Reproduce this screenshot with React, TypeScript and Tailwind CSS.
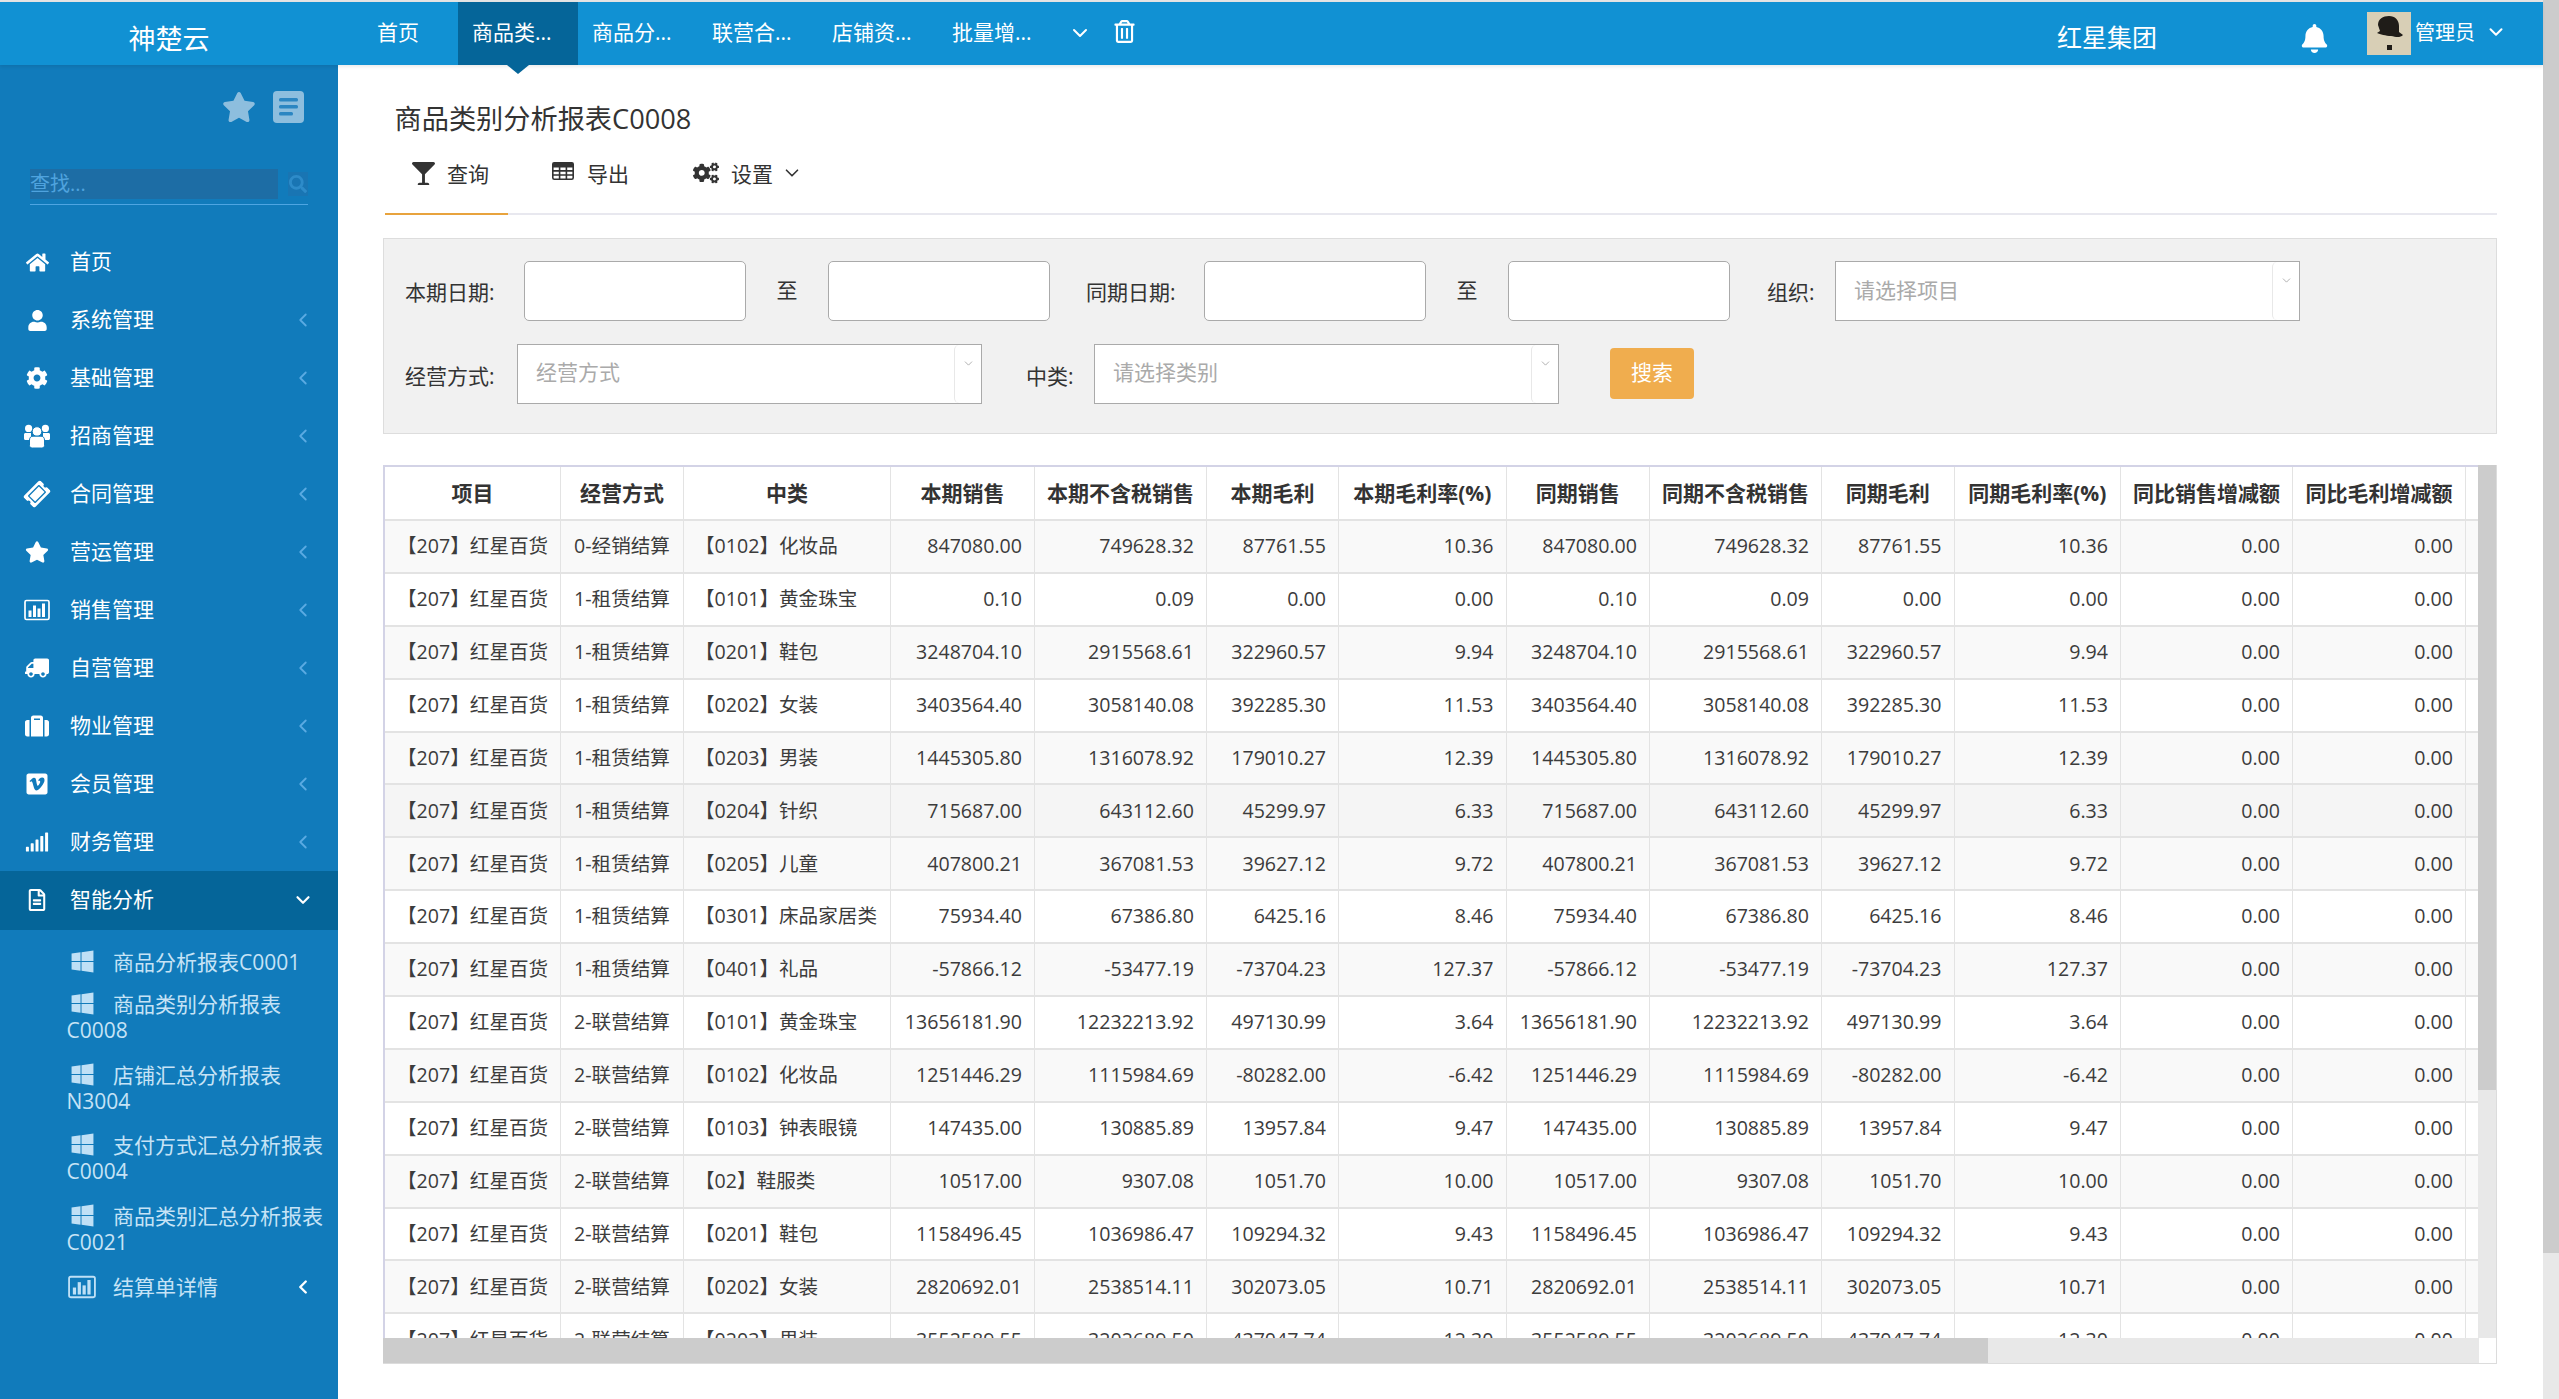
import React from "react";
import { ChevronLeft, ChevronDown } from "lucide-react";
import {
  FaHome, FaUser, FaCog, FaTicketAlt, FaStar, FaTruck, FaSuitcase,
  FaVimeoSquare, FaSignal, FaRegFileAlt, FaWindows, FaBell, FaRegTrashAlt, FaGlassMartini,
  FaCogs, FaSearch,
} from "react-icons/fa";

function UsersIcon({ size }: { size: number }) {
  return (
    <svg viewBox="0 0 26 24" width={size} height={size} fill="currentColor">
      <circle cx="4.6" cy="4.4" r="3.6" />
      <circle cx="21.4" cy="4.4" r="3.6" />
      <path d="M0 10.5c0-1.2 1-1.5 2-1.5h5v7H1.5C.6 16 0 15.4 0 14.5zM26 10.5c0-1.2-1-1.5-2-1.5h-5v7h5.500c.9 0 1.500-.6 1.500-1.500z" />
      <circle cx="13" cy="7.500" r="4.800" stroke="#117bbb" strokeWidth="1" />
      <path d="M5.500 16c0-2.500 1.500-3.800 3.500-3.800h8c2 0 3.500 1.300 3.500 3.800v5.500c0 1.600-1.500 2.500-3 2.500H8.500c-1.500 0-3-.9-3-2.500z" stroke="#117bbb" strokeWidth="1" />
    </svg>
  );
}

function BoxChart({ size }: { size: number }) {
  return (
    <svg viewBox="0 0 26 21" width={size} height={size} fill="currentColor">
      <rect x="1" y="1" width="24" height="19" rx="1.500" fill="none" stroke="currentColor" strokeWidth="1.700" />
      <rect x="4.500" y="11" width="3" height="6.500" />
      <rect x="9" y="6" width="3" height="11.500" />
      <rect x="13.500" y="9" width="3" height="8.500" />
      <rect x="18" y="4" width="3" height="13.500" />
    </svg>
  );
}

function DocIcon() {
  return (
    <svg viewBox="0 0 31 32" className="w-[31px] h-[32px] shrink-0">
      <rect width="31" height="32" rx="4" fill="#8dbede" />
      <rect x="6" y="7" width="19" height="3.500" rx="1.500" fill="#2b86c2" />
      <rect x="6" y="14" width="19" height="3.500" rx="1.500" fill="#2b86c2" />
      <rect x="6" y="21" width="14" height="3.500" rx="1.500" fill="#2b86c2" />
    </svg>
  );
}

function GridIcon() {
  return (
    <svg viewBox="0 0 22 18" className="w-[22px] h-[18px] mt-[2px] shrink-0" fill="none" stroke="#333333" strokeWidth="1.600">
      <rect x="0.800" y="0.800" width="20.400" height="16.400" rx="1.500" />
      <path d="M0.800 4.800H21.200M0.800 8.900H21.200M0.800 13H21.200M7.600 4.800V17.200M14.400 4.800V17.200" />
      <rect x="0.800" y="0.800" width="20.400" height="4" fill="#333333" stroke="none" />
    </svg>
  );
}

const menu = [
  { t: "首页", i: FaHome, s: 23, c: false },
  { t: "系统管理", i: FaUser, s: 21, c: true },
  { t: "基础管理", i: FaCog, s: 22, c: true },
  { t: "招商管理", i: UsersIcon, s: 26, c: true },
  { t: "合同管理", i: FaTicketAlt, s: 24, c: true, r: true },
  { t: "营运管理", i: FaStar, s: 24, c: true },
  { t: "销售管理", i: BoxChart, s: 26, c: true },
  { t: "自营管理", i: FaTruck, s: 24, c: true, f: true },
  { t: "物业管理", i: FaSuitcase, s: 24, c: true },
  { t: "会员管理", i: FaVimeoSquare, s: 24, c: true },
  { t: "财务管理", i: FaSignal, s: 24, c: true },
];

const subs = ["商品分析报表C0001", "商品类别分析报表C0008", "店铺汇总分析报表N3004", "支付方式汇总分析报表C0004", "商品类别汇总分析报表C0021"];

const tabs = ["首页", "商品类...", "商品分...", "联营合...", "店铺资...", "批量增..."];

const colClasses = [
  "w-[176px]", "w-[123px]", "w-[207px]", "w-[144px]", "w-[172px]", "w-[132px]", "w-[167.5px]",
  "w-[143.5px]", "w-[172px]", "w-[132.5px]", "w-[166.5px]", "w-[172px]", "w-[173px]", "w-[13px]",
];

const heads = ["项目", "经营方式", "中类", "本期销售", "本期不含税销售", "本期毛利", "本期毛利率(%)", "同期销售", "同期不含税销售", "同期毛利", "同期毛利率(%)", "同比销售增减额", "同比毛利增减额", ""];

const rows: string[][] = [
  ["0-经销结算", "【0102】化妆品", "847080.00", "749628.32", "87761.55", "10.36"],
  ["1-租赁结算", "【0101】黄金珠宝", "0.10", "0.09", "0.00", "0.00"],
  ["1-租赁结算", "【0201】鞋包", "3248704.10", "2915568.61", "322960.57", "9.94"],
  ["1-租赁结算", "【0202】女装", "3403564.40", "3058140.08", "392285.30", "11.53"],
  ["1-租赁结算", "【0203】男装", "1445305.80", "1316078.92", "179010.27", "12.39"],
  ["1-租赁结算", "【0204】针织", "715687.00", "643112.60", "45299.97", "6.33"],
  ["1-租赁结算", "【0205】儿童", "407800.21", "367081.53", "39627.12", "9.72"],
  ["1-租赁结算", "【0301】床品家居类", "75934.40", "67386.80", "6425.16", "8.46"],
  ["1-租赁结算", "【0401】礼品", "-57866.12", "-53477.19", "-73704.23", "127.37"],
  ["2-联营结算", "【0101】黄金珠宝", "13656181.90", "12232213.92", "497130.99", "3.64"],
  ["2-联营结算", "【0102】化妆品", "1251446.29", "1115984.69", "-80282.00", "-6.42"],
  ["2-联营结算", "【0103】钟表眼镜", "147435.00", "130885.89", "13957.84", "9.47"],
  ["2-联营结算", "【02】鞋服类", "10517.00", "9307.08", "1051.70", "10.00"],
  ["2-联营结算", "【0201】鞋包", "1158496.45", "1036986.47", "109294.32", "9.43"],
  ["2-联营结算", "【0202】女装", "2820692.01", "2538514.11", "302073.05", "10.71"],
  ["2-联营结算", "【0203】男装", "3552589.55", "3202689.50", "437047.74", "12.30"],
];

function SelectBox({ text, pad }: { text: string; pad: string }) {
  return (
    <div className="w-[465px] h-[60px] flex bg-white border border-[#aaaaaa]">
      <div className={`flex-1 pl-[18px] text-[21px] leading-[30px] text-[#aaaaaa] ${pad}`}>{text}</div>
      <div className="w-[27px] h-full border-l border-[#e8e8e8] rounded-[5px] flex justify-center pt-[12px]">
        <ChevronDown size={13} strokeWidth={1.4} className="text-[#999999]" />
      </div>
    </div>
  );
}

function DateBox() {
  return <input className="w-[222px] h-[60px] bg-white border border-[#aaaaaa] rounded-[5px]" />;
}

function Label({ text, className }: { text: string; className: string }) {
  return <span className={`text-[21px] leading-[30px] text-[#333333] whitespace-nowrap ${className}`}>{text}</span>;
}

function Avatar() {
  return (
    <svg viewBox="0 0 44 43" className="w-[44px] h-[43px] shrink-0">
      <rect width="44" height="43" fill="#d8cfb6" />
      <path d="M11 13c0-6 5-9 11-9s10 4 10 10l0 6 4 3c-3 3-7 2-12 1-5 0-11-2-14-3l3-2z" fill="#1f1c18" />
      <rect x="20" y="33" width="5" height="5" fill="#1f1c18" />
    </svg>
  );
}

export default function App() {
  return (
    <div className="flex h-[1399px] w-full overflow-hidden bg-white text-[#333333] font-['Open_Sans','Noto_Sans_CJK_SC',sans-serif]">
      <div className="flex-1 min-w-0 flex flex-col">
        <div className="h-[2px] bg-[#e4e4e4]" />
        <header className="relative h-[63px] flex items-center bg-[#1191d3] text-white shadow-[0_2px_3px_rgba(0,0,0,0.08)] z-10">
          <div className="w-[338px] shrink-0 text-center text-[27px] leading-[36px] pt-[10px]">神楚云</div>
          <nav className="flex h-full">
            {tabs.map((t, i) => (
              <div key={t} className={`relative w-[120px] h-full flex items-center text-[21px] pb-[2px] ${i === 0 ? "justify-center" : "pl-[14px]"} ${i === 1 ? "bg-[#056599]" : ""}`}>
                {t}
                {i === 1 && (
                  <span className="absolute left-1/2 -ml-[11px] top-full w-0 h-0 border-x-[11px] border-x-transparent border-t-[9px] border-t-[#056599]" />
                )}
              </div>
            ))}
          </nav>
          <ChevronDown size={24} strokeWidth={2} className="ml-[10px] -mt-[2px]" />
          <FaRegTrashAlt size={23} className="ml-[21px] -mt-[4px]" />
          <div className="ml-[921px] w-[101px] text-[25px] whitespace-nowrap pt-[8px]">红星集团</div>
          <FaBell size={29} className="ml-[142px] mt-[9px]" />
          <div className="ml-[38px] flex items-center">
            <Avatar />
            <span className="ml-[4px] text-[20px] -mt-[2px]">管理员</span>
            <ChevronDown size={22} strokeWidth={2.2} className="ml-[10px] -mt-[4px]" />
          </div>
        </header>

        <div className="flex-1 min-h-0 flex">
          <aside className="w-[338px] shrink-0 bg-[#117bbb] text-white overflow-hidden">
            <div className="flex justify-end items-center gap-[17px] pr-[34px] pt-[25px] text-[#8dbede]">
              <FaStar size={34} />
              <DocIcon />
            </div>
            <div className="mt-[45px] mx-[30px] h-[36px] flex gap-[10px] border-b-[1.5px] border-[#4ea5e2]">
              <div className="flex-1 h-[30px] bg-[#1d6da5] text-[#4fa3de] text-[20px] leading-[30px]">查找...</div>
              <div className="w-[20px] h-[24px] mt-[3px] bg-[#1975b3] text-[#2d8bc9] flex items-center justify-center">
                <FaSearch size={18} />
              </div>
            </div>
            <ul className="mt-[28px]">
              {menu.map((m) => {
                const I = m.i;
                return (
                  <li key={m.t} className="h-[58px] flex items-center pl-[24px] pr-[26px] text-[21px]">
                    <span className={`w-[26px] flex justify-center ${m.r ? "rotate-[-45deg]" : ""} ${m.f ? "-scale-x-100" : ""}`}>
                      <I size={m.s} />
                    </span>
                    <span className="ml-[20px] flex-1">{m.t}</span>
                    {m.c && <ChevronLeft size={22} strokeWidth={2} className="text-[#5aaae2] -mr-[2px]" />}
                  </li>
                );
              })}
              <li className="h-[59px] flex items-center pl-[24px] pr-[26px] pb-[2px] text-[21px] bg-[#056599]">
                <span className="w-[26px] flex justify-center"><FaRegFileAlt size={22} /></span>
                <span className="ml-[20px] flex-1">智能分析</span>
                <ChevronDown size={22} strokeWidth={2.4} className="-mr-[2px]" />
              </li>
            </ul>
            <ul className="pt-[10px] text-[#c6e3f6] text-[21px] leading-[26px]">
              {subs.map((s) => (
                <li key={s} className="pl-[66.5px] pr-[10px] py-[9.2px] first:pb-[7px]">
                  <span className="inline-block h-[26px] w-[46.5px] pl-[3px] align-top"><FaWindows size={25} className="block text-[#bfe0f6]" /></span>
                  {s}
                </li>
              ))}
              <li className="pl-[68px] pr-[26px] py-[9px] flex items-center">
                <span className="text-[#bfe0f6]"><BoxChart size={28} /></span>
                <span className="ml-[17px] flex-1">结算单详情</span>
                <ChevronLeft size={22} strokeWidth={2.6} className="text-white -mr-[2px]" />
              </li>
            </ul>
          </aside>

          <main className="flex-1 min-w-0 pl-[45px] pr-[46px] pt-[35px]">
            <h1 className="ml-[11.5px] text-[27.2px] leading-[38px] font-normal text-[#333333]">商品类别分析报表C0008</h1>
            <div className="h-[77px] flex border-b-2 border-[#e8e8ef] ml-[2px]">
              <div className="h-[77px] w-[123px] border-b-2 border-[#e8a33d] flex items-start pt-[22px] pl-[27px] text-[21px]">
                <FaGlassMartini size={23} className="mt-[2px]" />
                <span className="ml-[12px] leading-[28px]">查询</span>
              </div>
              <div className="flex items-start pt-[22px] text-[21px] ml-[44px]">
                <GridIcon />
                <span className="ml-[13px] leading-[28px]">导出</span>
              </div>
              <div className="flex items-start pt-[22px] text-[21px] ml-[64px]">
                <FaCogs size={26} />
                <span className="ml-[12px] leading-[28px]">设置</span>
                <ChevronDown size={22} strokeWidth={1.8} className="ml-[8px] mt-[2px]" />
              </div>
            </div>

            <section className="mt-[23px] h-[196px] bg-[#f1f1f1] border border-[#dddddd] pt-[22px] pl-[21px]">
              <div className="flex items-center">
                <Label text="本期日期:" className="pt-[2px] w-[119px]" />
                <DateBox />
                <span className="w-[82px] text-center text-[21px] text-[#333333]">至</span>
                <DateBox />
                <Label text="同期日期:" className="pt-[2px] ml-[36px] w-[118px]" />
                <DateBox />
                <span className="w-[82px] text-center text-[21px] text-[#333333]">至</span>
                <DateBox />
                <Label text="组织:" className="pt-[2px] ml-[37px] w-[68px]" />
                <SelectBox text="请选择项目" pad="pt-[13px]" />
              </div>
              <div className="flex items-center mt-[23px]">
                <Label text="经营方式:" className="pt-[4px] w-[112px]" />
                <SelectBox text="经营方式" pad="pt-[12px]" />
                <Label text="中类:" className="pt-[4px] ml-[44px] w-[68px]" />
                <SelectBox text="请选择类别" pad="pt-[12px]" />
                <button className="ml-[51px] -mt-[2px] w-[84px] h-[51px] bg-[#f0ad4e] rounded-[4px] text-white text-[21px]">搜索</button>
              </div>
            </section>

            <section className="mt-[31px] h-[899px] flex flex-col border-r border-b border-[#dcdcdc]">
              <div className="flex-1 min-h-0 flex">
                <div className="flex-1 min-w-0 overflow-hidden border-t-2 border-l-2 border-[#d3d3e6]">
                  <table className="table-fixed w-[2094px] border-separate border-spacing-0 text-[19.6px] text-[#3c3c3c]">
                    <colgroup>
                      {colClasses.map((c, i) => <col key={i} className={c} />)}
                    </colgroup>
                    <thead>
                      <tr>
                        {heads.map((h, i) => (
                          <th key={i} className="h-[54px] bg-white border-r border-b-2 border-[#e3e3e3] text-center text-[21px] font-bold text-[#333333] whitespace-nowrap p-0 pt-[1px]">{h}</th>
                        ))}
                      </tr>
                    </thead>
                    <tbody>
                      {rows.map((r, idx) => {
                        const bg = idx === 5 ? "bg-[#f5f5f5]" : idx % 2 === 0 ? "bg-[#f9f9f9]" : "bg-white";
                        const nums = [r[2], r[3], r[4], r[5], r[2], r[3], r[4], r[5], "0.00", "0.00"];
                        const cell = "h-[52.9px] p-0 pb-[1px] border-r border-b-2 border-[#e3e3e3] whitespace-nowrap";
                        return (
                          <tr key={idx} className={bg}>
                            <td className={`${cell} pl-[12px]`}>【207】红星百货</td>
                            <td className={`${cell} text-center`}>{r[0]}</td>
                            <td className={`${cell} pl-[11px]`}>{r[1]}</td>
                            {nums.map((n, j) => (
                              <td key={j} className={`${cell} text-right pr-[12px]`}>{n}</td>
                            ))}
                            <td className={cell} />
                          </tr>
                        );
                      })}
                    </tbody>
                  </table>
                </div>
                <div className="w-[18px] shrink-0 bg-[#e8e8e8]">
                  <div className="h-[625px] bg-[#cccccc]" />
                </div>
              </div>
              <div className="h-[25px] shrink-0 flex bg-white">
                <div className="w-[1605px] bg-[#cccccc]" />
                <div className="w-[491px] bg-[#e8e8e8]" />
              </div>
            </section>
          </main>
        </div>
      </div>
      <div className="w-[16px] shrink-0 bg-[#e8e8e8]">
        <div className="h-[1253px] bg-[#cccccc]" />
      </div>
    </div>
  );
}
